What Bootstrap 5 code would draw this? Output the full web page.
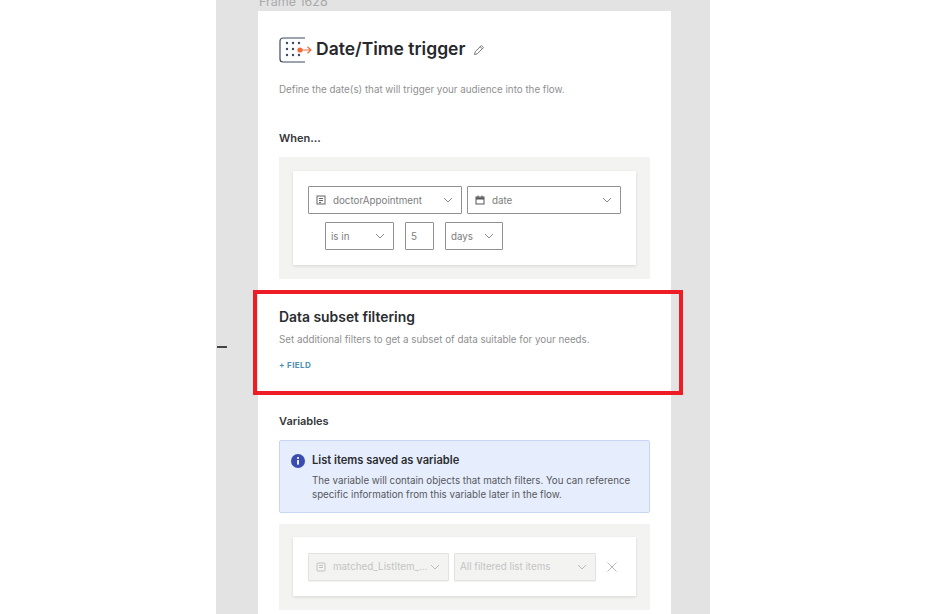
<!DOCTYPE html>
<html lang="en">
<head>
  <meta charset="UTF-8">
  <title>Date/Time trigger</title>
  <link href="https://cdn.jsdelivr.net/npm/bootstrap@5.3.2/dist/css/bootstrap.min.css" rel="stylesheet">
  <style>
    html, body { height: 614px; overflow: hidden; background: #fff; }
    body { font-family: Inter, "Liberation Sans", sans-serif; color: #26282b; }

    .canvas-col { width: 494px; height: 614px; background: #e3e3e3; overflow: hidden; position: relative; }
    .frame-label { font-size: 12.5px; line-height: 14px; color: #a9a9a9; margin: -5px 0 2px 43px; }
    .dash-mark { position: absolute; left: 1px; top: 346px; width: 10px; height: 1.5px; background: #444; }
    .frame-sheet { width: 413px; height: 610px; margin-left: 42px; background: #fff; padding: 25px 21px 0; position: relative; }

    .flow-title { font-size: 17.5px; font-weight: 600; line-height: 25px; padding-bottom: 2px; color: #26282b; margin: 0; }
    .help-text { font-size: 9.8px; line-height: 14px; color: #8f8f8f; margin: 0; }
    .sub-head { font-size: 11px; font-weight: 600; line-height: 14px; margin: 0; color: #33363a; }
    .sect-head { font-size: 13.9px; font-weight: 600; line-height: 18px; margin: 0; color: #2a2c2f; }
    .add-field { font-size: 8px; font-weight: 700; letter-spacing: .4px; line-height: 12px; color: #4d8fb0; text-decoration: none; }

    .gray-panel { background: #f3f3f2; padding: 14px; }
    .white-inner { background: #fff; box-shadow: 0 1px 3px rgba(0,0,0,.12); padding: 15px; }
    .when-inner { height: 94px; }
    .vars-inner { height: 59px; padding: 16px 15px; }

    .fake-select { height: 28px; border: 1px solid #919191; border-radius: 1px; font-size: 9.8px; color: #7d7d7d; padding: 0 8px 0 7px; background: #fff; }
    .fake-select span { position: relative; top: 1px; }
    .fake-select svg.chev { margin-left: auto; flex: none; }
    .fake-select .ico { margin-right: 7px; flex: none; }
    .sel-wide { width: 154px; }
    .sel-op { width: 69px; padding-left: 5px; }
    .sel-num { width: 29px; padding-left: 5px; }
    .sel-unit { width: 58px; padding-left: 5px; }
    .row-indent { padding-left: 17px; }

    .fake-select.is-off { border-color: #e2e2e0; background: #f3f3f2; color: #c4c4c4; height: 28px; box-shadow: 0 1px 1px rgba(0,0,0,.06); }
    .sel-var-a { width: 141px; }
    .sel-var-b { width: 142px; margin-left: 5px; padding-left: 5px; }
    .clip-text { white-space: nowrap; overflow: hidden; }
    .close-x { margin-left: 11px; flex: none; }

    .info-box { background: #e6edfc; border: 1px solid #c9d6f3; border-radius: 2px; height: 73px; padding: 11px 11px; gap: 7px; }
    .info-dot { width: 14px; height: 14px; flex: none; margin-top: 2px; }
    .info-title { font-size: 11.1px; font-weight: 600; line-height: 17px; color: #2a2c2f; }
    .info-body { font-size: 9.75px; line-height: 14px; color: #55585d; margin-top: 5px; }

    .red-outline { position: absolute; left: 37px; top: 290px; width: 430px; height: 105px; border: 4px solid #ee1c25; pointer-events: none; }

    .mt-title { margin-top: 20px; }
    .when-head { margin-top: 34px; margin-bottom: 12px; }
    .when-panel { height: 122px; }
    .gap-when { gap: 5px; }
    .row-two { margin-top: 8px; }
    .row-two .sel-num { margin-left: 11px; margin-right: 11px; }
    .subset-head { margin-top: 29px; }
    .subset-text { margin-top: 7px; }
    .field-link { margin-top: 12px; }
    .vars-head { margin-top: 43px; margin-bottom: 12px; }
    .vars-panel { margin-top: 11px; height: 86px; padding-top: 13px; }
  </style>
</head>
<body>

<div class="canvas-col mx-auto">
  <div class="frame-label">Frame 1628</div>
  <div class="dash-mark"></div>

  <div class="frame-sheet">
    <!-- Header -->
    <div class="d-flex align-items-center">
      <svg width="33" height="26" viewBox="0 0 33 26" fill="none">
        <path d="M26 1H4a3 3 0 0 0-3 3v18a3 3 0 0 0 3 3h22" stroke="#3c4a63" stroke-width="1.2"/>
        <g fill="#3c4a63">
          <circle cx="8" cy="6" r="1.2"/><circle cx="14" cy="6" r="1.2"/><circle cx="20" cy="6" r="1.2"/>
          <circle cx="8" cy="12" r="1.2"/><circle cx="14" cy="12" r="1.2"/>
          <circle cx="8" cy="18" r="1.2"/><circle cx="14" cy="18" r="1.2"/><circle cx="20" cy="18" r="1.2"/>
        </g>
        <circle cx="21" cy="13" r="2.6" fill="#f26b3a"/>
        <path d="M21 13h11M28.5 9.8l3.4 3.2-3.4 3.2" stroke="#f26b3a" stroke-width="1.2"/>
      </svg>
      <h1 class="flow-title ms-1">Date/Time trigger</h1>
      <svg class="ms-2" width="12" height="12" viewBox="0 0 12 12" fill="none" stroke="#777" stroke-width="1">
        <path d="M1.5 10.5l.7-2.8L8.4 1.5l2.1 2.1-6.2 6.2z"/><path d="M7.2 2.7l2.1 2.1"/>
      </svg>
    </div>

    <p class="help-text mt-title">Define the date(s) that will trigger your audience into the flow.</p>

    <p class="sub-head when-head">When...</p>

    <div class="gray-panel when-panel">
      <div class="white-inner when-inner">
        <div class="d-flex gap-when">
          <div class="fake-select sel-wide d-flex align-items-center">
            <svg class="ico" width="10" height="10" viewBox="0 0 10 10" fill="none" stroke="#666"><rect x="1" y="1" width="8" height="8"/><path d="M3 3.5h4M3 5.5h4M3 7.5h2"/></svg>
            <span>doctorAppointment</span>
            <svg class="chev" width="10" height="6" viewBox="0 0 10 6" fill="none" stroke="#8a8a8a"><path d="M1 1l4 4 4-4"/></svg>
          </div>
          <div class="fake-select sel-wide d-flex align-items-center">
            <svg class="ico" width="10" height="10" viewBox="0 0 10 10" fill="none" stroke="#555"><rect x="1" y="2" width="8" height="7"/><path d="M1 3.5h8" stroke-width="2"/><path d="M3 .5v2M7 .5v2"/></svg>
            <span>date</span>
            <svg class="chev" width="10" height="6" viewBox="0 0 10 6" fill="none" stroke="#8a8a8a"><path d="M1 1l4 4 4-4"/></svg>
          </div>
        </div>
        <div class="d-flex row-indent row-two">
          <div class="fake-select sel-op d-flex align-items-center">
            <span>is in</span>
            <svg class="chev" width="10" height="6" viewBox="0 0 10 6" fill="none" stroke="#8a8a8a"><path d="M1 1l4 4 4-4"/></svg>
          </div>
          <div class="fake-select sel-num d-flex align-items-center"><span>5</span></div>
          <div class="fake-select sel-unit d-flex align-items-center">
            <span>days</span>
            <svg class="chev" width="10" height="6" viewBox="0 0 10 6" fill="none" stroke="#8a8a8a"><path d="M1 1l4 4 4-4"/></svg>
          </div>
        </div>
      </div>
    </div>

    <!-- Data subset filtering -->
    <h2 class="sect-head subset-head">Data subset filtering</h2>
    <p class="help-text subset-text">Set additional filters to get a subset of data suitable for your needs.</p>
    <a class="add-field d-block field-link" href="#">+ FIELD</a>

    <!-- Variables -->
    <p class="sub-head vars-head">Variables</p>
    <div class="info-box d-flex">
      <svg class="info-dot" viewBox="0 0 14 14"><circle cx="7" cy="7" r="7" fill="#3b4cb0"/><rect x="6.1" y="6" width="1.8" height="4.6" fill="#fff"/><circle cx="7" cy="4" r="1.1" fill="#fff"/></svg>
      <div>
        <div class="info-title">List items saved as variable</div>
        <div class="info-body">The variable will contain objects that match filters. You can reference specific information from this variable later in the flow.</div>
      </div>
    </div>

    <div class="gray-panel vars-panel">
      <div class="white-inner vars-inner d-flex align-items-center">
        <div class="fake-select is-off sel-var-a d-flex align-items-center">
          <svg class="ico" width="10" height="10" viewBox="0 0 10 10" fill="none" stroke="#c0c0c0"><rect x="1" y="1" width="8" height="8" rx="1"/><path d="M3 3.5h4M3 5.5h4"/></svg>
          <span class="clip-text">matched_ListItem_...</span>
          <svg class="chev" width="10" height="6" viewBox="0 0 10 6" fill="none" stroke="#bbb"><path d="M1 1l4 4 4-4"/></svg>
        </div>
        <div class="fake-select is-off sel-var-b d-flex align-items-center">
          <span>All filtered list items</span>
          <svg class="chev" width="10" height="6" viewBox="0 0 10 6" fill="none" stroke="#bbb"><path d="M1 1l4 4 4-4"/></svg>
        </div>
        <svg class="close-x" width="10" height="10" viewBox="0 0 10 10" fill="none" stroke="#bbb"><path d="M.5.5l9 9M9.5.5l-9 9"/></svg>
      </div>
    </div>
  </div>

  <div class="red-outline"></div>
</div>

<script src="https://cdn.jsdelivr.net/npm/bootstrap@5.3.2/dist/js/bootstrap.bundle.min.js"></script>
</body>
</html>
